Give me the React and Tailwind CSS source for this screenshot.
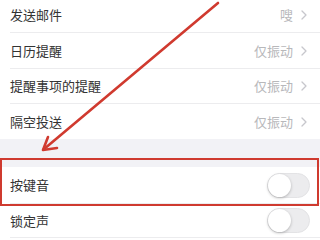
import React from "react";

const font = { fontFamily: '"Noto Sans CJK SC", "Noto Sans", sans-serif' };

function Chevron() {
  return (
    <svg width="6" height="10" viewBox="0 0 6 10" className="ml-[8px]">
      <path d="M1 1 L5 5 L1 9" fill="none" stroke="#c7c7cc" strokeWidth="1.3" strokeLinecap="round" strokeLinejoin="round" />
    </svg>
  );
}

function Row({ label, value, h, divider = true }) {
  return (
    <div className={`flex items-center pl-[10px] ${h}`}>
      <div className={`flex h-full flex-1 items-center pr-[13px] ${divider ? "border-b border-[#ececee]" : ""}`}>
        <span className="flex-1 text-[13px] text-[#333333]">{label}</span>
        <span className="text-[13px] text-[#b8b8bb]">{value}</span>
        <Chevron />
      </div>
    </div>
  );
}

function Toggle() {
  return (
    <div className="relative h-[25px] w-[43px] rounded-full border border-[#e3e3e5] bg-[#ececee]">
      <div className="absolute left-0 top-0 h-[23px] w-[23px] rounded-full bg-white shadow-[0_1px_3px_rgba(0,0,0,0.25)]" />
    </div>
  );
}

function ToggleRow({ label, h, divider }) {
  return (
    <div className={`flex items-center pl-[10px] ${h}`}>
      <div className={`flex h-full flex-1 items-center pr-[10px] ${divider ? "border-b border-[#ececee]" : ""}`}>
        <span className="flex-1 text-[13px] text-[#333333]">{label}</span>
        <Toggle />
      </div>
    </div>
  );
}

export default function App() {
  return (
    <div className="relative h-[240px] w-[320px] overflow-hidden bg-white" style={font}>
      <div className="mt-[-3px] flex flex-col">
        <Row label="发送邮件" value="嗖" h="h-[36px]" />
        <Row label="日历提醒" value="仅振动" h="h-[36px]" />
        <Row label="提醒事项的提醒" value="仅振动" h="h-[35px]" />
        <Row label="隔空投送" value="仅振动" h="h-[35px]" divider={false} />
        <div className="h-[28px] bg-[#f2f2f6]" />
        <ToggleRow label="按键音" h="h-[37px]" divider />
        <ToggleRow label="锁定声" h="h-[34px]" divider />
      </div>

      <div className="absolute left-0 top-[158px] h-[48px] w-[319px] border-[2.5px] border-[#cf3a2f]" />

      <svg className="absolute left-0 top-0" width="320" height="240" viewBox="0 0 320 240">
        <line x1="218" y1="3" x2="43.5" y2="149.5" stroke="#d03a2f" strokeWidth="2.6" strokeLinecap="round" />
        <polyline points="57,148 43,150 48,137" fill="none" stroke="#d03a2f" strokeWidth="2.6" strokeLinecap="round" strokeLinejoin="round" />
      </svg>
    </div>
  );
}
